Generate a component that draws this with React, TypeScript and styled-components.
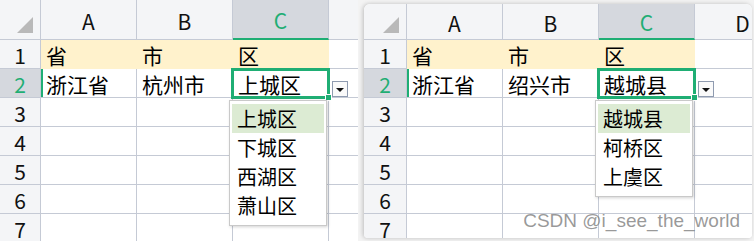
import React from 'react';
import styled, { createGlobalStyle, css } from 'styled-components';

const GREEN = '#1fae74'
const LINE = '#c5cad5'

const GlobalStyle = createGlobalStyle`
body {
  margin: 0;
  background: #fff;
  font-family: "Noto Sans CJK SC", "Noto Sans", sans-serif;
}
`

const Page = styled.div`
position: relative;
display: flex;
align-items: flex-start;
width: 754px;
height: 241px;
overflow: hidden;
background: #f3f3f3;
`

const Panel = styled.div<{ $floating?: boolean; $width: number }>`
background: #fff;
flex: none;
width: ${p => p.$width}px;
overflow: hidden;
${p => p.$floating ? css`
  margin: 4px 0 0 6px;
  height: 234px;
  border-radius: 6px 6px 4px 4px;
  box-shadow: -1px 0 4px rgba(0, 0, 0, 0.22);
` : css`
  height: 241px;
`}
`

const Grid = styled.div<{ $cols: string; $head: number }>`
display: grid;
grid-template-columns: ${p => p.$cols};
grid-template-rows: ${p => p.$head}px;
grid-auto-rows: 29px;
`

const Corner = styled.div`
position: relative;
background: #f4f5f7;
border-right: 1px solid ${LINE};
border-bottom: 1px solid ${LINE};
&::after {
  content: '';
  position: absolute;
  right: 7px;
  bottom: 6px;
  width: 0;
  height: 0;
  border-left: 16px solid transparent;
  border-bottom: 16px solid #b9b9b9;
}
`

const ColHead = styled.div<{ $active?: boolean }>`
display: flex;
align-items: center;
justify-content: center;
font-size: 21px;
color: ${p => p.$active ? GREEN : '#111'};
background: ${p => p.$active ? '#d5d8de' : '#f4f5f7'};
border-right: 1px solid ${LINE};
border-bottom: ${p => p.$active ? `2px solid ${GREEN}` : `1px solid ${LINE}`};
padding-top: 2px;
`

const RowHead = styled.div<{ $active?: boolean }>`
display: flex;
align-items: center;
justify-content: center;
font-size: 21px;
padding-top: 2px;
color: ${p => p.$active ? GREEN : '#111'};
background: ${p => p.$active ? '#d5d8de' : '#f4f5f7'};
border-right: 1px solid ${LINE};
border-bottom: 1px solid ${LINE};
`

const Cell = styled.div<{ $yellow?: boolean; $mark?: boolean; $selected?: boolean }>`
position: relative;
display: flex;
align-items: center;
padding: 1px 0 0 5px;
font-size: 21px;
color: #000;
white-space: nowrap;
background: ${p => p.$yellow ? '#fff2cc' : '#fff'};
border-right: 1px solid ${p => p.$yellow ? '#fff2cc' : LINE};
border-bottom: 1px solid ${p => p.$yellow ? '#fff2cc' : LINE};
${p => p.$mark && css`box-shadow: inset 2px 0 0 ${GREEN};`}
${p => p.$selected && css`z-index: 2;`}
`

const Selection = styled.div`
position: absolute;
top: -1px;
left: -2px;
right: -2px;
bottom: -2px;
border: 3px solid ${GREEN};
pointer-events: none;
&::after {
  content: '';
  position: absolute;
  right: -5px;
  bottom: -5px;
  width: 5px;
  height: 5px;
  background: ${GREEN};
  border: 1px solid #fff;
}
`

const DropButton = styled.div`
position: absolute;
left: 99px;
top: 12px;
width: 16px;
height: 16px;
box-sizing: border-box;
border: 1px solid #8f9bb0;
background: #fafafa;
display: flex;
align-items: center;
justify-content: center;
&::before {
  content: '';
  width: 0;
  height: 0;
  margin-top: 2px;
  border-left: 4px solid transparent;
  border-right: 4px solid transparent;
  border-top: 4px solid #111;
}
`

const DropList = styled.ul`
position: absolute;
left: -4px;
top: 31px;
width: 98px;
box-sizing: border-box;
margin: 0;
padding: 3px 2px 5px;
list-style: none;
background: #fff;
border: 1px solid #c9c9c9;
box-shadow: 1px 1px 3px rgba(0, 0, 0, 0.18);
`

const DropItem = styled.li<{ $current?: boolean }>`
height: 29px;
display: flex;
align-items: center;
padding-left: 5px;
font-size: 20px;
color: #000;
background: ${p => p.$current ? '#dcebd3' : 'transparent'};
`

const Watermark = styled.div`
position: absolute;
right: 14px;
bottom: 9px;
font-family: "Liberation Sans", sans-serif;
font-size: 19px;
color: rgba(120, 120, 120, 0.75);
z-index: 3;
`

type SheetProps = {
  cols: number[]
  head: number
  city: string
  district: string
  options: string[]
  showD?: boolean
}

const letters = ['A', 'B', 'C', 'D']

function Sheet({ cols, head, city, district, options, showD }: SheetProps) {
  const data: string[][] = [
    ['省', '市', '区', ''],
    ['浙江省', city, district, ''],
  ]
  const rows = [1, 2, 3, 4, 5, 6, 7]
  return (
    <Grid $cols={cols.map(c => c + 'px').join(' ')} $head={head}>
      <Corner />
      {letters.map(l =>
        <ColHead key={l} $active={l === 'C'}>{l === 'D' && !showD ? '' : l}</ColHead>
      )}
      {rows.map(r => <React.Fragment key={r}>
        <RowHead $active={r === 2}>{r}</RowHead>
        {letters.map((l, i) => {
          const text = data[r - 1]?.[i] ?? ''
          const selected = r === 2 && l === 'C'
          return <Cell key={l} $yellow={r === 1 && i < 3} $mark={r === 2 && l === 'A'} $selected={selected}>
            {text}
            {selected && <>
              <Selection />
              <DropButton />
              <DropList>
                {options.map(o => <DropItem key={o} $current={o === district}>{o}</DropItem>)}
              </DropList>
            </>}
          </Cell>
        })}
      </React.Fragment>)}
    </Grid>
  )
}

function App() {
  return (
    <Page>
      <GlobalStyle />
      <Panel $width={358}>
        <Sheet cols={[41, 96, 96, 96, 96]} head={40} city='杭州市' district='上城区'
          options={['上城区', '下城区', '西湖区', '萧山区']} />
      </Panel>
      <Panel $floating $width={388}>
        <Sheet cols={[43, 96, 96, 96, 96]} head={36} city='绍兴市' district='越城县'
          options={['越城县', '柯桥区', '上虞区']} showD />
      </Panel>
      <Watermark>CSDN @i_see_the_world</Watermark>
    </Page>
  )
}

export default App;
